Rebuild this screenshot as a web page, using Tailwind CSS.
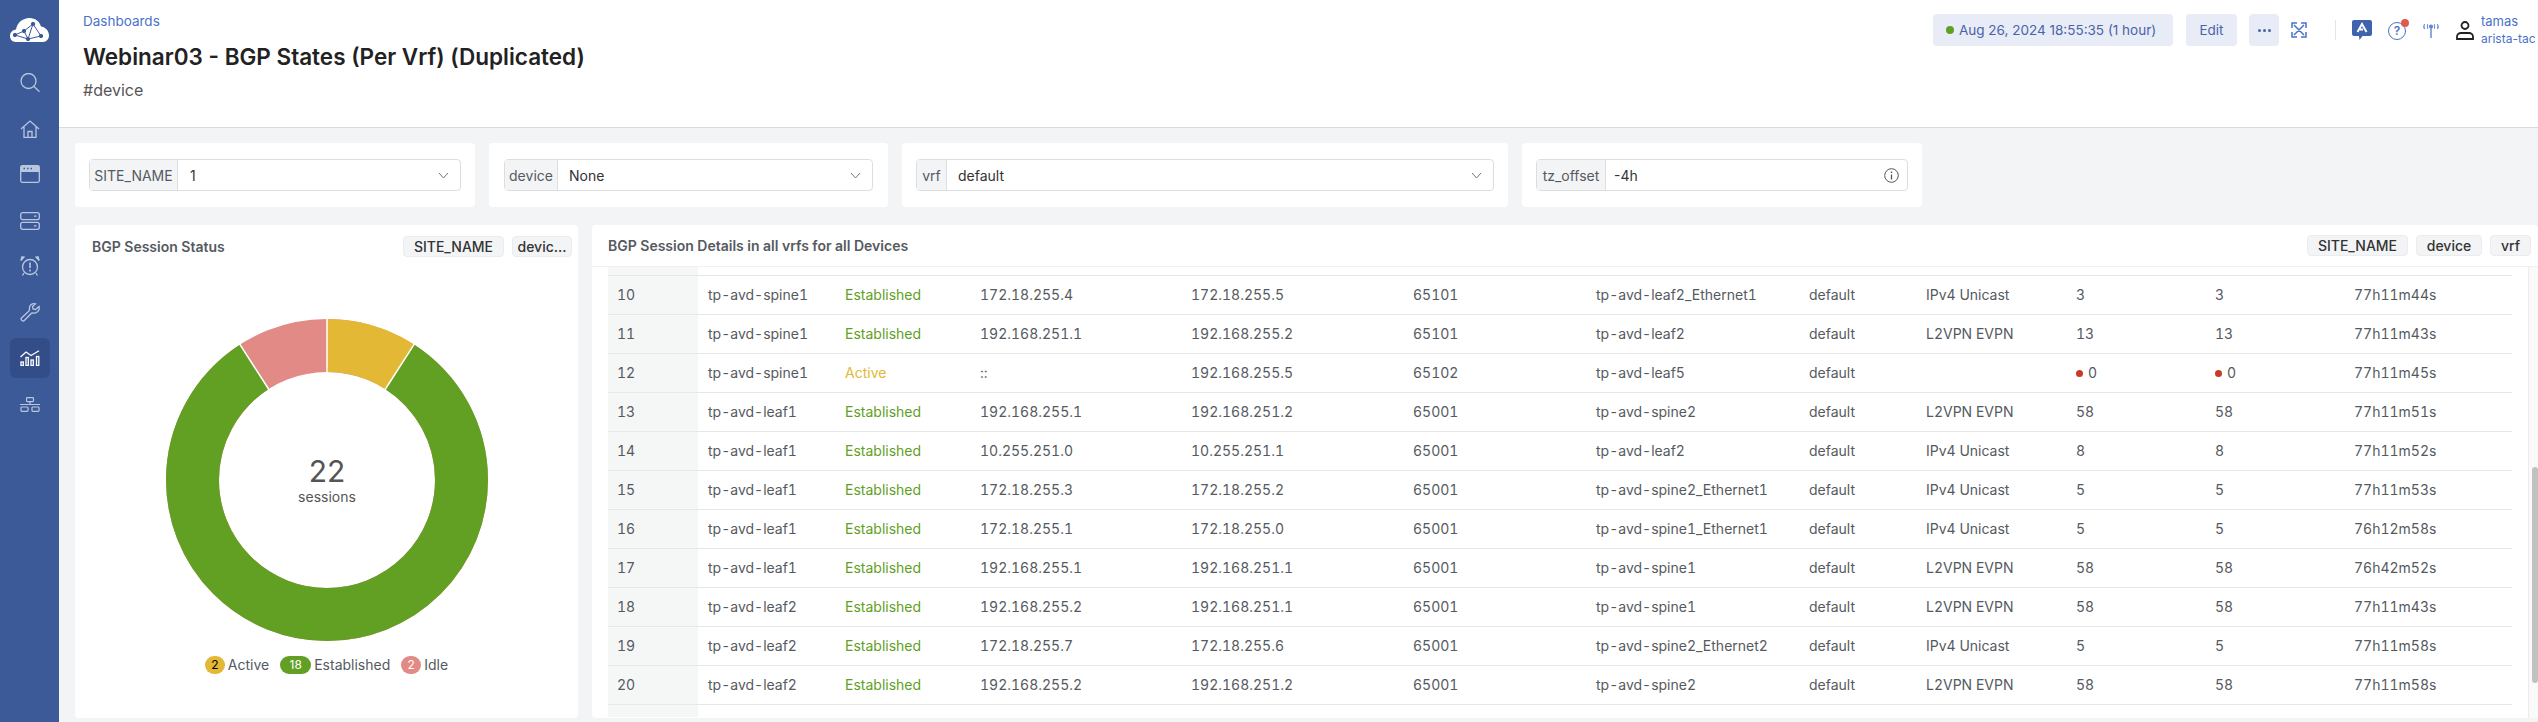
<!DOCTYPE html>
<html lang="en">
<head>
    <meta charset="UTF-8">
    <title>Webinar03 - BGP States (Per Vrf) (Duplicated)</title>
    <script src="https://cdn.jsdelivr.net/npm/@tailwindcss/browser@4"></script>
</head>
<body class="bg-[#f3f4f6] h-[722px] w-[2538px] overflow-hidden font-['Inter',sans-serif] text-[#555a61]">
<div class="flex h-[722px]">
    <!-- Sidebar -->
    <aside class="w-[59px] shrink-0 bg-[#3c5a98] flex flex-col items-center text-[#b9c6e0]">
        <svg class="mt-[18px] w-[39px] h-[24px]" viewBox="0 0 39 24"><path fill="#fff" d="M6 24C2 24 0 21 0 18C0 14.500 2.500 12 6 11.500C7 5 12.500 0 19.500 0C25.500 0 29.500 3.500 31 8.500C35.500 9 39 13 39 17.500C39 21 36.500 24 33 24Z"/><g stroke="#3c5a98" stroke-width="1" fill="#3c5a98"><path fill="none" d="M23 6L14 13L5 17L18 21L23 6L31 18L18 21L14 13"/><circle cx="23" cy="6" r="1.700"/><circle cx="14" cy="13" r="1.700"/><circle cx="5" cy="17" r="1.700"/><circle cx="18" cy="21" r="1.700"/><circle cx="31" cy="18" r="1.700"/></g></svg>
        <svg class="mt-[31px] w-[20px] h-[19px]" viewBox="0 0 20 19" fill="none" stroke="currentColor" stroke-width="1.300"><circle cx="8.500" cy="8" r="7.500"/><path d="M14 13.500L19.500 18.700"/></svg>
        <svg class="mt-[28px] w-[20px] h-[18px]" viewBox="0 0 20 18" fill="none" stroke="currentColor" stroke-width="1.300"><path d="M1 9L10 1L19 9M4 7V17.300H16V7M8 17.300V11.500H12V17.300"/></svg>
        <svg class="mt-[27px] w-[20px] h-[18px]" viewBox="0 0 20 18" fill="none" stroke="currentColor" stroke-width="1.300"><rect x=".7" y=".7" width="18.600" height="16.600" rx="1.500"/><path d="M1 4H19" stroke-width="6"/><path d="M3.500 3.500H5M7 3.500H8.500M10.500 3.500H12" stroke="#3c5a98" stroke-width="1.300"/></svg>
        <svg class="mt-[29px] w-[20px] h-[18px]" viewBox="0 0 20 18" fill="none" stroke="currentColor" stroke-width="1.300"><rect x=".7" y=".7" width="18.600" height="7" rx="2"/><rect x=".7" y="10.300" width="18.600" height="7" rx="2"/><path d="M14 4.200H16.500M14 13.800H16.500"/></svg>
        <svg class="mt-[26px] w-[20px] h-[20px]" viewBox="0 0 20 20" fill="none" stroke="currentColor" stroke-width="1.300"><circle cx="10" cy="11" r="7.500"/><path d="M10 6.500V12M10 13.500V15.500" stroke-width="1.600"/><path d="M.8 4.500L4 1.200L2 .8ZM19.200 4.500L16 1.200L18 .8ZM4 17L2.500 19.500M16 17L17.500 19.500"/></svg>
        <svg class="mt-[27px] w-[20px] h-[19px]" viewBox="0 0 20 19" fill="none" stroke="currentColor" stroke-width="1.300"><path d="M19 3.500L15.500 6.500L13 6L12.500 3.500L15.500 .9C12 0 8.800 2.500 9.500 6.500L9 8L1.500 15C.2 16.500 2.800 19 4.300 17.500L11.500 10.200L13.500 10C17 10.500 20 7.500 19 3.500Z"/></svg>
        <div class="mt-[16px] w-[40px] h-[40px] rounded-md bg-[#324d87] flex items-center justify-center">
            <svg class="w-[20px] h-[16px]" viewBox="0 0 20 16" fill="none" stroke="#fff" stroke-width="1.300"><path d="M.5 7L6 2L11 5.500L19 .7"/><rect x="1" y="12" width="2.300" height="3.500"/><rect x="6" y="7.500" width="2.300" height="8"/><rect x="11" y="10" width="2.300" height="5.500"/><rect x="16.500" y="6.500" width="2.300" height="9"/></svg>
        </div>
        <svg class="mt-[19px] w-[20px] h-[15px]" viewBox="0 0 20 15" fill="none" stroke="currentColor" stroke-width="1.200"><rect x="6.500" y=".6" width="7" height="4" rx=".8"/><path d="M10 4.600V7.500M0 7.500H20"/><rect x="1" y="10" width="7" height="4.400" rx=".8"/><rect x="12" y="10" width="7" height="4.400" rx=".8"/></svg>
    </aside>

    <div class="flex-1 min-w-0 flex flex-col">
        <!-- Page header -->
        <header class="h-[128px] shrink-0 bg-white border-b border-[#d9dbe0] flex justify-between pl-[24px] pr-[3px]">
            <div>
                <a class="block mt-[12px] text-[13.500px] leading-[18px] text-[#4a72c8]">Dashboards</a>
                <h1 class="mt-[12px] text-[22.500px] leading-[30px] font-semibold text-[#222]">Webinar03 - BGP States (Per Vrf) (Duplicated)</h1>
                <p class="mt-[8px] text-[16px] leading-[20px] text-[#555]">#device</p>
            </div>
            <div class="flex items-start pt-[14px] text-[#4a63a8]">
                <button class="h-[32px] w-[240px] rounded bg-[#e8ecf6] flex items-center pl-[13px] gap-[5px] text-[13.500px] whitespace-nowrap"><span class="w-[8px] h-[8px] rounded-full bg-[#5f9f24]"></span>Aug 26, 2024 18:55:35 (1 hour)</button>
                <button class="ml-[13px] h-[32px] w-[51px] rounded bg-[#e8ecf6] text-[13.500px]">Edit</button>
                <button class="ml-[12px] h-[32px] w-[30px] rounded bg-[#e8ecf6] flex items-center justify-center gap-[2px]"><span class="w-[3px] h-[3px] rounded-full bg-[#4a63a8]"></span><span class="w-[3px] h-[3px] rounded-full bg-[#4a63a8]"></span><span class="w-[3px] h-[3px] rounded-full bg-[#4a63a8]"></span></button>
                <svg class="ml-[12px] mt-[8px] w-[16px] h-[16px]" viewBox="0 0 16 16" fill="none" stroke="#4a72c8" stroke-width="1.500"><path d="M1 6V1H6M10 1H15V6M1 10V15H6M10 15H15V10M3 3L13 13M13 3L3 13"/></svg>
                <div class="ml-[28px] mt-[6px] w-px h-[20px] bg-[#e3e5e8]"></div>
                <svg class="ml-[16px] mt-[6px] w-[20px] h-[20px]" viewBox="0 0 20 20"><path fill="#3f63ad" d="M2 0H18A2 2 0 0 1 20 2V14A2 2 0 0 1 18 16H10.500L7.500 20L7 16H2A2 2 0 0 1 0 14V2A2 2 0 0 1 2 0Z"/><path fill="none" stroke="#fff" stroke-width="2" d="M5.500 12L10 4L14.500 12M8 9.500H11"/></svg>
                <div class="relative ml-[16px] mt-[8px] w-[18px] h-[18px] rounded-full border-[1.500px] border-[#4a72c8] flex items-center justify-center text-[12px] font-semibold text-[#4a72c8]">?<span class="absolute -top-[4px] -right-[4px] w-[8px] h-[8px] rounded-full bg-[#e05a50]"></span></div>
                <svg class="ml-[16px] mt-[9px] w-[18px] h-[15px]" viewBox="0 0 18 15" fill="none" stroke="#5f84d0" stroke-width="1.100"><circle cx="9" cy="3.500" r="1.500" fill="#5f84d0"/><path d="M9 5V15" stroke-width="1.400"/><path d="M5.800 1.300C5 2.800 5 4.200 5.800 5.700M12.200 1.300C13 2.800 13 4.200 12.200 5.700M2.500 1C1.500 2.800 1.500 4.200 2.500 6M15.500 1C16.500 2.800 16.500 4.200 15.500 6"/></svg>
                <svg class="ml-[16px] mt-[7px] w-[18px] h-[19px]" viewBox="0 0 18 19" fill="none" stroke="#222" stroke-width="1.800"><circle cx="9" cy="4.500" r="3.500"/><path d="M1 18V15.500C1 13.500 3 12 5 12H13C15 12 17 13.500 17 15.500V18Z"/></svg>
                <div class="ml-[7px] w-[54px] -mt-[2px] text-[#4a72c8] whitespace-nowrap"><div class="text-[13px] leading-[18px]">tamas</div><div class="text-[12px] leading-[18px]">arista-tac</div></div>
            </div>
        </header>

        <main class="flex-1 min-h-0 flex flex-col pl-[16px] pt-[15px]">
            <!-- Variable filters -->
            <div class="flex gap-[14px] h-[64px] text-[14px]">
                <div class="w-[400px] bg-white rounded px-[14px] py-[16px]">
                    <div class="h-[32px] flex border border-[#dcdee2] rounded"><span class="w-[88px] shrink-0 bg-[#f3f4f6] border-r border-[#dcdee2] flex items-center justify-center">SITE_NAME</span><span class="flex-1 flex items-center justify-between pl-[12px] pr-[11px] text-[#333]">1<svg class="w-[11px] h-[7px]" viewBox="0 0 11 7" fill="none" stroke="#777"><path d="M1 1L5.500 6L10 1"/></svg></span></div>
                </div>
                <div class="w-[399px] bg-white rounded px-[15px] py-[16px]">
                    <div class="h-[32px] flex border border-[#dcdee2] rounded"><span class="w-[53px] shrink-0 bg-[#f3f4f6] border-r border-[#dcdee2] flex items-center justify-center">device</span><span class="flex-1 flex items-center justify-between pl-[11px] pr-[11px] text-[#333]">None<svg class="w-[11px] h-[7px]" viewBox="0 0 11 7" fill="none" stroke="#777"><path d="M1 1L5.500 6L10 1"/></svg></span></div>
                </div>
                <div class="w-[606px] bg-white rounded px-[14px] py-[16px]">
                    <div class="h-[32px] flex border border-[#dcdee2] rounded"><span class="w-[30px] shrink-0 bg-[#f3f4f6] border-r border-[#dcdee2] flex items-center justify-center">vrf</span><span class="flex-1 flex items-center justify-between pl-[11px] pr-[11px] text-[#333]">default<svg class="w-[11px] h-[7px]" viewBox="0 0 11 7" fill="none" stroke="#777"><path d="M1 1L5.500 6L10 1"/></svg></span></div>
                </div>
                <div class="w-[400px] bg-white rounded px-[14px] py-[16px]">
                    <div class="h-[32px] flex border border-[#dcdee2] rounded"><span class="w-[69px] shrink-0 bg-[#f3f4f6] border-r border-[#dcdee2] flex items-center justify-center">tz_offset</span><span class="flex-1 flex items-center justify-between pl-[8px] pr-[8px] text-[#333]">-4h<svg class="w-[15px] h-[15px]" viewBox="0 0 15 15" fill="none" stroke="#555"><circle cx="7.500" cy="7.500" r="6.800"/><path d="M7.500 6.500V11.500M7.500 3.500V5" stroke-width="1.300"/></svg></span></div>
                </div>
            </div>

            <div class="mt-[18px] flex gap-[14px] h-[493px]">
                <!-- Donut panel -->
                <section class="w-[503px] shrink-0 bg-white rounded flex flex-col">
                    <div class="h-[42px] shrink-0 flex items-center justify-between pl-[17px] pr-[6px]">
                        <h2 class="text-[14px] font-semibold text-[#555a61]">BGP Session Status</h2>
                        <div class="flex gap-[8px] text-[14px] font-medium text-[#333]">
                            <span class="h-[21px] w-[101px] flex items-center justify-center rounded bg-[#f3f4f6] border border-[#ebecef]">SITE_NAME</span>
                            <span class="h-[21px] w-[60px] flex items-center justify-center rounded bg-[#f3f4f6] border border-[#ebecef]">devic...</span>
                        </div>
                    </div>
                    <div class="flex-1 flex flex-col items-center">
                        <svg class="mt-[51px] w-[324px] h-[324px]" viewBox="0 0 324 324">
                            <g fill="none" stroke-width="53">
                                <circle cx="162" cy="162" r="134.500" stroke="#e28a85"/>
                                <circle cx="162" cy="162" r="134.500" stroke="#62a024" stroke-dasharray="691.400 845.100" stroke-dashoffset="-76.800" transform="rotate(-90 162 162)"/>
                                <circle cx="162" cy="162" r="134.500" stroke="#e2b834" stroke-dasharray="76.800 845.100" transform="rotate(-90 162 162)"/>
                            </g>
                            <path d="M162 0V56M249.600 25.700L219.800 72M74.400 25.700L104.200 72" stroke="#fff" stroke-width="1.500"/>
                            <text x="162" y="163.700" text-anchor="middle" font-size="30" fill="#555">22</text>
                            <text x="162" y="183.700" text-anchor="middle" font-size="14" fill="#555">sessions</text>
                        </svg>
                        <div class="mt-[14px] flex items-center text-[14px] leading-[18px]">
                            <span class="w-[20px] h-[18px] rounded-full bg-[#e2b834] text-black text-[12px] flex items-center justify-center">2</span><span class="ml-[3px]">Active</span>
                            <span class="ml-[11px] w-[31px] h-[18px] rounded-full bg-[#62a024] text-white text-[12px] flex items-center justify-center">18</span><span class="ml-[3px]">Established</span>
                            <span class="ml-[11px] w-[20px] h-[18px] rounded-full bg-[#e28a85] text-white text-[12px] flex items-center justify-center">2</span><span class="ml-[3px]">Idle</span>
                        </div>
                    </div>
                </section>

                <!-- Table panel -->
                <section class="flex-1 min-w-0 bg-white rounded flex flex-col">
                    <div class="h-[42px] shrink-0 flex items-center justify-between border-b border-[#f0f1f2] pl-[16px] pr-[7px]">
                        <h2 class="text-[14px] font-semibold text-[#555a61]">BGP Session Details in all vrfs for all Devices</h2>
                        <div class="flex gap-[8px] text-[14px] font-medium text-[#333]">
                            <span class="h-[21px] w-[101px] flex items-center justify-center rounded bg-[#f3f4f6] border border-[#ebecef]">SITE_NAME</span>
                            <span class="h-[21px] w-[66px] flex items-center justify-center rounded bg-[#f3f4f6] border border-[#ebecef]">device</span>
                            <span class="h-[21px] w-[41px] flex items-center justify-center rounded bg-[#f3f4f6] border border-[#ebecef]">vrf</span>
                        </div>
                    </div>
                    <div class="flex-1 min-h-0 flex">
                        <div class="flex-1 min-w-0 pl-[16px] pr-[16px]">
                            <table class="w-[1904px] table-fixed text-[14px] tabular-nums border-collapse [&_td]:pl-[10px] [&_td:first-child]:pl-[9px] [&_td:first-child]:bg-[#f5f6f6] [&_tr]:border-b [&_tr]:border-[#e6e7e9]">
                                <colgroup><col class="w-[90px]"><col class="w-[137px]"><col class="w-[135px]"><col class="w-[211px]"><col class="w-[222px]"><col class="w-[183px]"><col class="w-[213px]"><col class="w-[117px]"><col class="w-[150px]"><col class="w-[139px]"><col class="w-[139px]"><col class="w-[168px]"></colgroup>
                                <tbody>
                                    <tr class="h-[8px]"><td></td><td colspan="11"></td></tr>
                                    <tr class="h-[39px]"><td>10</td><td>tp-avd-spine1</td><td class="text-[#5f9f24]">Established</td><td>172.18.255.4</td><td>172.18.255.5</td><td>65101</td><td>tp-avd-leaf2_Ethernet1</td><td>default</td><td>IPv4 Unicast</td><td>3</td><td>3</td><td>77h11m44s</td></tr>
                                    <tr class="h-[39px]"><td>11</td><td>tp-avd-spine1</td><td class="text-[#5f9f24]">Established</td><td>192.168.251.1</td><td>192.168.255.2</td><td>65101</td><td>tp-avd-leaf2</td><td>default</td><td>L2VPN EVPN</td><td>13</td><td>13</td><td>77h11m43s</td></tr>
                                    <tr class="h-[39px]"><td>12</td><td>tp-avd-spine1</td><td class="text-[#e2b834]">Active</td><td>::</td><td>192.168.255.5</td><td>65102</td><td>tp-avd-leaf5</td><td>default</td><td></td><td><span class="inline-block w-[7px] h-[7px] rounded-full bg-[#c93a22] mr-[5px] align-[1px]"></span>0</td><td><span class="inline-block w-[7px] h-[7px] rounded-full bg-[#c93a22] mr-[5px] align-[1px]"></span>0</td><td>77h11m45s</td></tr>
                                    <tr class="h-[39px]"><td>13</td><td>tp-avd-leaf1</td><td class="text-[#5f9f24]">Established</td><td>192.168.255.1</td><td>192.168.251.2</td><td>65001</td><td>tp-avd-spine2</td><td>default</td><td>L2VPN EVPN</td><td>58</td><td>58</td><td>77h11m51s</td></tr>
                                    <tr class="h-[39px]"><td>14</td><td>tp-avd-leaf1</td><td class="text-[#5f9f24]">Established</td><td>10.255.251.0</td><td>10.255.251.1</td><td>65001</td><td>tp-avd-leaf2</td><td>default</td><td>IPv4 Unicast</td><td>8</td><td>8</td><td>77h11m52s</td></tr>
                                    <tr class="h-[39px]"><td>15</td><td>tp-avd-leaf1</td><td class="text-[#5f9f24]">Established</td><td>172.18.255.3</td><td>172.18.255.2</td><td>65001</td><td>tp-avd-spine2_Ethernet1</td><td>default</td><td>IPv4 Unicast</td><td>5</td><td>5</td><td>77h11m53s</td></tr>
                                    <tr class="h-[39px]"><td>16</td><td>tp-avd-leaf1</td><td class="text-[#5f9f24]">Established</td><td>172.18.255.1</td><td>172.18.255.0</td><td>65001</td><td>tp-avd-spine1_Ethernet1</td><td>default</td><td>IPv4 Unicast</td><td>5</td><td>5</td><td>76h12m58s</td></tr>
                                    <tr class="h-[39px]"><td>17</td><td>tp-avd-leaf1</td><td class="text-[#5f9f24]">Established</td><td>192.168.255.1</td><td>192.168.251.1</td><td>65001</td><td>tp-avd-spine1</td><td>default</td><td>L2VPN EVPN</td><td>58</td><td>58</td><td>76h42m52s</td></tr>
                                    <tr class="h-[39px]"><td>18</td><td>tp-avd-leaf2</td><td class="text-[#5f9f24]">Established</td><td>192.168.255.2</td><td>192.168.251.1</td><td>65001</td><td>tp-avd-spine1</td><td>default</td><td>L2VPN EVPN</td><td>58</td><td>58</td><td>77h11m43s</td></tr>
                                    <tr class="h-[39px]"><td>19</td><td>tp-avd-leaf2</td><td class="text-[#5f9f24]">Established</td><td>172.18.255.7</td><td>172.18.255.6</td><td>65001</td><td>tp-avd-spine2_Ethernet2</td><td>default</td><td>IPv4 Unicast</td><td>5</td><td>5</td><td>77h11m58s</td></tr>
                                    <tr class="h-[39px]"><td>20</td><td>tp-avd-leaf2</td><td class="text-[#5f9f24]">Established</td><td>192.168.255.2</td><td>192.168.251.2</td><td>65001</td><td>tp-avd-spine2</td><td>default</td><td>L2VPN EVPN</td><td>58</td><td>58</td><td>77h11m58s</td></tr>
                                    <tr class="h-[13px] !border-b-0"><td></td><td colspan="11"></td></tr>
                                </tbody>
                            </table>
                        </div>
                        <!-- Scrollbar -->
                        <div class="w-[10px] shrink-0 border-l border-[#ebecef] bg-[#fafafa] pl-[3px]">
                            <div class="mt-[200px] h-[216px] w-[6px] rounded bg-[#c1c1c1]"></div>
                        </div>
                    </div>
                </section>
            </div>
        </main>
    </div>
</div>
</body>
</html>
